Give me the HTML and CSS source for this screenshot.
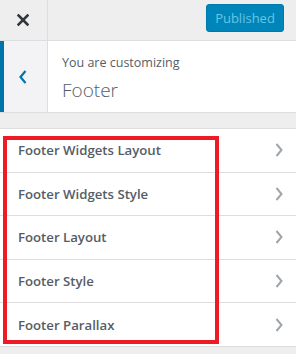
FILE: index.html
```html
<!DOCTYPE html>
<html>
<head>
<meta charset="utf-8">
<link rel="stylesheet" href="styles.css">
</head>
<body>
<div class="panel">
  <header class="topbar">
    <button class="close" aria-label="Close">
      <svg width="12" height="12" viewBox="0 0 12 12"><path d="M1.5 1.5 L10.5 10.5 M10.5 1.5 L1.5 10.5" stroke="#32373c" stroke-width="2.6" stroke-linecap="square" fill="none"/></svg>
    </button>
    <div class="spacer"></div>
    <button class="publish">Published</button>
  </header>
  <section class="section-head">
    <button class="back" aria-label="Back">
      <svg width="8" height="14" viewBox="0 0 8 14"><path d="M6.5 1 L1.5 7 L6.5 13" stroke="#0073aa" stroke-width="2.2" fill="none"/></svg>
    </button>
    <div class="title">
      <span class="pre">You are customizing</span>
      <span class="name">Footer</span>
    </div>
  </section>
  <ul class="list">
    <li class="item"><span>Footer Widgets Layout</span><svg class="chev" width="8" height="14" viewBox="0 0 8 14"><path d="M1.5 1 L6.5 7 L1.5 13" stroke="#a0a5aa" stroke-width="2" fill="none"/></svg></li>
    <li class="item"><span>Footer Widgets Style</span><svg class="chev" width="8" height="14" viewBox="0 0 8 14"><path d="M1.5 1 L6.5 7 L1.5 13" stroke="#a0a5aa" stroke-width="2" fill="none"/></svg></li>
    <li class="item"><span>Footer Layout</span><svg class="chev" width="8" height="14" viewBox="0 0 8 14"><path d="M1.5 1 L6.5 7 L1.5 13" stroke="#a0a5aa" stroke-width="2" fill="none"/></svg></li>
    <li class="item"><span>Footer Style</span><svg class="chev" width="8" height="14" viewBox="0 0 8 14"><path d="M1.5 1 L6.5 7 L1.5 13" stroke="#a0a5aa" stroke-width="2" fill="none"/></svg></li>
    <li class="item"><span>Footer Parallax</span><svg class="chev" width="8" height="14" viewBox="0 0 8 14"><path d="M1.5 1 L6.5 7 L1.5 13" stroke="#a0a5aa" stroke-width="2" fill="none"/></svg></li>
    <div class="highlight"></div>
  </ul>
</div>
</body>
</html>
```
FILE: styles.css
```css
html, body {
  margin: 0;
  padding: 0;
  background: #eeeeee;
  font-family: "Open Sans", "Noto Sans", sans-serif;
  color: #555d66;
}
.panel {
  width: 296px;
  height: 354px;
  overflow: hidden;
  position: relative;
}
.topbar {
  display: flex;
  align-items: center;
  height: 40px;
  border-bottom: 1px solid #dddddd;
  background: #eeeeee;
}
.close {
  width: 48px;
  height: 40px;
  border: 0;
  border-right: 1px solid #dddddd;
  background: transparent;
  padding: 0;
  display: flex;
  align-items: center;
  justify-content: center;
  padding-right: 1px;
}
.spacer { flex: 1; }
.publish {
  width: 78px;
  height: 28px;
  margin-right: 12px;
  margin-top: -4px;
  background: #0085ba;
  border: 1px solid #0078aa;
  border-radius: 3px;
  color: #66c6e4;
  font-family: inherit;
  font-size: 13px;
  padding: 0;
}
.section-head {
  display: flex;
  height: 71px;
  background: #ffffff;
  border-bottom: 1px solid #dddddd;
}
.back {
  width: 48px;
  border: 0;
  border-left: 4px solid #0073aa;
  border-right: 1px solid #dddddd;
  background: #f3f3f5;
  padding: 0 0 0 0;
  display: flex;
  align-items: center;
  justify-content: center;
  padding-right: 6px;
}
.title {
  display: flex;
  flex-direction: column;
  padding: 12px 0 0 14px;
}
.pre {
  font-size: 12.5px;
  line-height: 20px;
  color: #555d66;
}
.name {
  font-size: 19px;
  line-height: 28px;
  font-weight: 300;
  color: #555d66;
  margin-top: 3px;
}
.list {
  list-style: none;
  margin: 15px 0 0 0;
  padding: 0;
  background: #ffffff;
  border-top: 1px solid #dddddd;
  position: relative;
}
.item {
  display: flex;
  align-items: center;
  justify-content: space-between;
  height: 42.6px;
  border-bottom: 1px solid #dddddd;
  padding: 0 13px 0 18px;
  font-size: 13.2px;
  font-weight: 600;
  color: #555d66;
}
.chev { display: block; }
.highlight {
  position: absolute;
  left: 3px;
  top: 7px;
  width: 208px;
  height: 200px;
  border: 4px solid #ed1c24;
}
```
